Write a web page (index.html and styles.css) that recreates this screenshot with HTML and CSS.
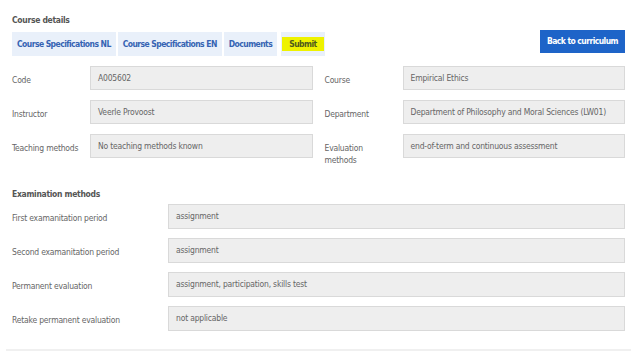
FILE: index.html
```html
<!DOCTYPE html>
<html lang="en">
<head>
  <meta charset="UTF-8" />
  <title>Course details</title>
  <link rel="stylesheet" href="styles.css">
</head>
<body>
  <div class="page">
    <h2 class="section-title">Course details</h2>

    <div class="toolbar">
      <div class="tabs">
        <a class="tab" href="#">Course Specifications NL</a>
        <a class="tab" href="#">Course Specifications EN</a>
        <a class="tab" href="#">Documents</a>
        <a class="tab tab-submit" href="#"><span class="marker">Submit</span></a>
      </div>
      <a class="btn-primary" href="#">Back to curriculum</a>
    </div>

    <div class="details">
      <div class="field-row">
        <label>Code</label>
        <div class="field">A005602</div>
      </div>
      <div class="field-row">
        <label>Course</label>
        <div class="field">Empirical Ethics</div>
      </div>
      <div class="field-row">
        <label>Instructor</label>
        <div class="field">Veerle Provoost</div>
      </div>
      <div class="field-row">
        <label>Department</label>
        <div class="field">Department of Philosophy and Moral Sciences (LW01)</div>
      </div>
      <div class="field-row">
        <label>Teaching methods</label>
        <div class="field">No teaching methods known</div>
      </div>
      <div class="field-row">
        <label>Evaluation methods</label>
        <div class="field">end-of-term and continuous assessment</div>
      </div>
    </div>

    <h2 class="section-title exam-title">Examination methods</h2>

    <div class="exam">
      <div class="exam-row">
        <label>First examanitation period</label>
        <div class="field">assignment</div>
      </div>
      <div class="exam-row">
        <label>Second examanitation period</label>
        <div class="field">assignment</div>
      </div>
      <div class="exam-row">
        <label>Permanent evaluation</label>
        <div class="field">assignment, participation, skills test</div>
      </div>
      <div class="exam-row">
        <label>Retake permanent evaluation</label>
        <div class="field">not applicable</div>
      </div>
    </div>

    <div class="divider"></div>
  </div>
</body>
</html>
```

FILE: styles.css
```css
body {
  margin: 0;
  font-family: 'DejaVu Sans Condensed', 'DejaVu Sans', sans-serif;
  font-size: 8.5px;
  letter-spacing: -0.2px;
  color: #666;
  background-color: #fff;
}
.page {
  width: 613px;
  padding: 13px 0 0 12px;
}
.section-title {
  margin: 0;
  font-size: 8.5px;
  letter-spacing: -0.3px;
  font-weight: bold;
  color: #555;
  line-height: 14px;
}
.toolbar {
  display: flex;
  justify-content: space-between;
  align-items: flex-start;
  margin-top: 5px;
}
.tabs {
  display: flex;
  gap: 2px;
}
.tab {
  display: block;
  height: 24px;
  line-height: 24px;
  padding: 0 5px;
  background-color: #e9f0fa;
  color: #3563b3;
  font-weight: bold;
  letter-spacing: -0.55px;
  text-decoration: none;
}
.tab-submit {
  margin-left: 2px;
  padding: 0 1px;
}
.marker {
  display: inline-block;
  line-height: 14px;
  padding: 0 7px;
  background-color: #eef200;
  color: #4d5a1e;
}
.btn-primary {
  display: block;
  height: 23px;
  line-height: 23px;
  padding: 0 7px;
  margin-top: -2px;
  background-color: #1e64c8;
  color: #fff;
  font-weight: bold;
  letter-spacing: -0.55px;
  text-decoration: none;
}
.details {
  display: grid;
  grid-template-columns: 1fr 1fr;
  column-gap: 12px;
  row-gap: 10px;
  margin-top: 10px;
}
.field-row {
  display: flex;
  align-items: flex-start;
}
.field-row label {
  width: 70px;
  margin-right: 8px;
  flex: none;
  line-height: 12px;
  padding-top: 8px;
}
.field {
  flex: 1;
  height: 24px;
  line-height: 22px;
  padding: 0 7px;
  box-sizing: border-box;
  background-color: #eee;
  border: 1px solid #d9d9d9;
  white-space: nowrap;
  overflow: hidden;
}
.exam-title {
  margin-top: 21px;
}
.exam {
  display: flex;
  flex-direction: column;
  gap: 9px;
  margin-top: 3px;
}
.exam-row {
  display: flex;
  align-items: center;
}
.exam-row label {
  width: 156px;
  flex: none;
  padding-top: 3px;
}
.exam-row .field {
  height: 25px;
  line-height: 23px;
}
.divider {
  height: 2px;
  background-color: #f0f0f0;
  margin: 18px 0 0 -6px;
  width: 625px;
}
```
